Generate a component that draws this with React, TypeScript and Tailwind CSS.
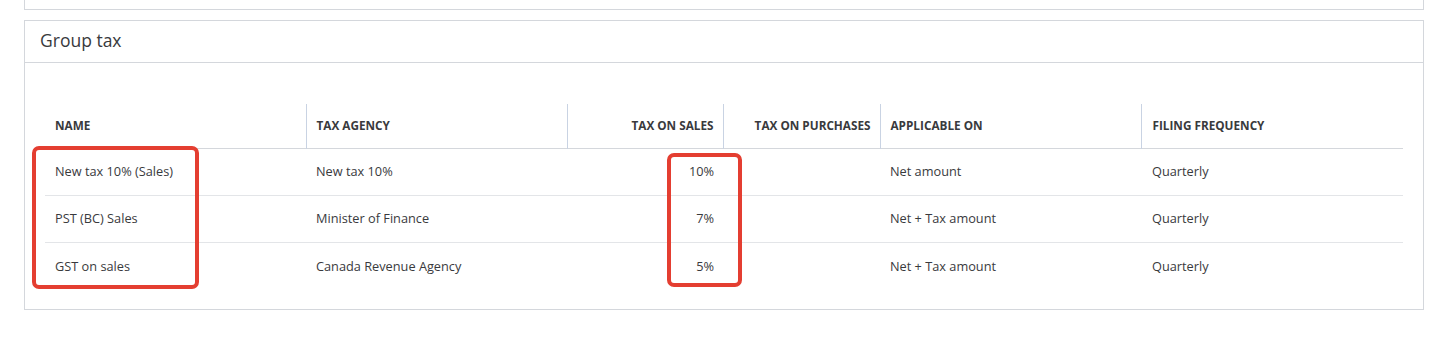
import React from 'react';

type Row = {
    name: string;
    agency: string;
    sales: string;
    purchases: string;
    applicable: string;
    frequency: string;
};

const rows: Row[] = [
    { name: 'New tax 10% (Sales)', agency: 'New tax 10%', sales: '10%', purchases: '', applicable: 'Net amount', frequency: 'Quarterly' },
    { name: 'PST (BC) Sales', agency: 'Minister of Finance', sales: '7%', purchases: '', applicable: 'Net + Tax amount', frequency: 'Quarterly' },
    { name: 'GST on sales', agency: 'Canada Revenue Agency', sales: '5%', purchases: '', applicable: 'Net + Tax amount', frequency: 'Quarterly' },
];

// column widths taken from the header dividers
const cols = ['w-[261px]', 'w-[261px]', 'w-[156px]', 'w-[157px]', 'w-[261px]', 'w-[262px]'];

export default function App() {
    return (
        <div className="w-[1453px] h-[346px] bg-white text-[#393a3d]" style={{ fontFamily: '"Open Sans", "Liberation Sans", sans-serif' }}>
            {/* previous panel, only its bottom edge shows */}
            <div className="ml-[24px] w-[1400px] h-[10px] border-x border-b border-[#d4d7dc]" />

            <div className="relative ml-[24px] mt-[10px] w-[1400px] border border-[#d4d7dc]">
                <div className="h-[42px] flex items-center pl-[15px] border-b border-[#d4d7dc]">
                    <h2 className="text-[17.5px] leading-none text-[#393a3d] pb-[1px]">Group tax</h2>
                </div>

                <div className="px-[20px] pt-[41px] pb-[20px]">
                    <table className="w-[1358px] table-fixed border-collapse">
                        <thead>
                            <tr className="h-[44px] border-b border-[#d4d7dc] text-[11.75px] font-bold text-[#393a3d]">
                                <th className={`${cols[0]} text-left pl-[10px] border-r border-[#c9d3e3]`}>NAME</th>
                                <th className={`${cols[1]} text-left pl-[10px] border-r border-[#c9d3e3]`}>TAX AGENCY</th>
                                <th className={`${cols[2]} text-right pr-[9px] border-r border-[#c9d3e3]`}>TAX ON SALES</th>
                                <th className={`${cols[3]} text-right pr-[9px] border-r border-[#c9d3e3]`}>TAX ON PURCHASES</th>
                                <th className={`${cols[4]} text-left pl-[10px] border-r border-[#c9d3e3]`}>APPLICABLE ON</th>
                                <th className={`${cols[5]} text-left pl-[11px]`}>FILING FREQUENCY</th>
                            </tr>
                        </thead>
                        <tbody className="text-[12.75px] text-[#393a3d]">
                            {rows.map((r, i) => (
                                <tr key={r.name} className={`h-[47px] ${i < rows.length - 1 ? 'border-b border-[#e3e5e8]' : ''}`}>
                                    <td className="pl-[10px] pt-[1px]">{r.name}</td>
                                    <td className="pl-[10px] pt-[1px]">{r.agency}</td>
                                    <td className="text-right pr-[9px] pt-[1px]">{r.sales}</td>
                                    <td className="text-right pr-[9px] pt-[1px]">{r.purchases}</td>
                                    <td className="pl-[10px] pt-[1px]">{r.applicable}</td>
                                    <td className="pl-[11px] pt-[1px]">{r.frequency}</td>
                                </tr>
                            ))}
                        </tbody>
                    </table>
                </div>

                {/* red annotation boxes */}
                <div className="absolute left-[7px] top-[125px] w-[167px] h-[143px] border-[4px] border-[#e43e31] rounded-[7px]" />
                <div className="absolute left-[642px] top-[132px] w-[75px] h-[134px] border-[4px] border-[#e43e31] rounded-[7px]" />
            </div>
        </div>
    );
}
